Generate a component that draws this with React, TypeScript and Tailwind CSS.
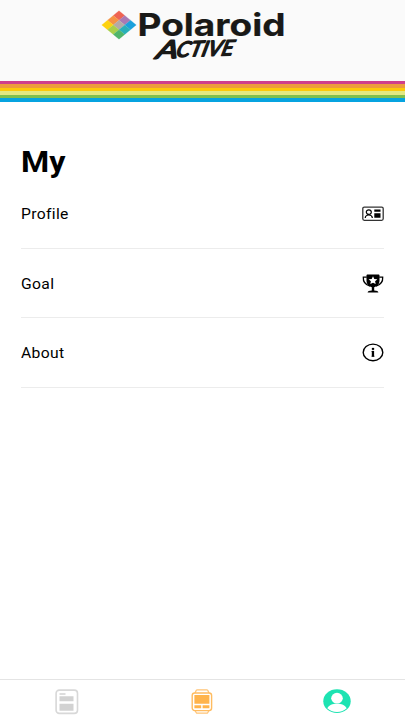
import React from 'react';

const cells = [
  ['#ee6352', '#a879b4', '#1aa0dc'],
  ['#f59244', '#b3aaa6', '#28b0b8'],
  ['#fdd20e', '#a9cf4a', '#4fb56a'],
];

const stripes = [
  { color: 'bg-[#cf3f8c]', height: 'h-[3px]' },
  { color: 'bg-[#ed9d3c]', height: 'h-1' },
  { color: 'bg-[#fdc90a]', height: 'h-[3px]' },
  { color: 'bg-[#e3e882]', height: 'h-1' },
  { color: 'bg-[#80bf4d]', height: 'h-[3px]' },
  { color: 'bg-[#06a3e0]', height: 'h-1' },
];

function Logo() {
  return (
    <svg width="190" height="60" viewBox="98 6 190 60" role="img" aria-label="Polaroid Active">
      <g transform="translate(119 10.7)">
        {cells.map((row, r) =>
          row.map((color, c) => {
            const x = (c - r) * 5.75;
            const y = (c + r) * 4.75;
            return (
              <path
                key={`${r}-${c}`}
                d={`M${x} ${y}l5.75 4.75l-5.75 4.75l-5.75 -4.75z`}
                fill={color}
                stroke={color}
                strokeWidth="0.2"
              />
            );
          })
        )}
      </g>
      <g fill="#191917" stroke="#191917">
        <text
          x="137.5"
          y="36"
          textLength="148"
          lengthAdjust="spacingAndGlyphs"
          fontFamily="Inter, sans-serif"
          fontSize="31.5"
          fontWeight="700"
          strokeWidth="0.2"
        >
          Polaroid
        </text>
        <g transform="translate(155 58.8) rotate(-2) skewX(-16)" strokeLinejoin="round">
          <text
            x="0"
            y="0"
            textLength="22"
            lengthAdjust="spacingAndGlyphs"
            fontFamily="Lato, sans-serif"
            fontSize="25"
            fontStyle="italic"
            strokeWidth="1.5"
          >
            A
          </text>
          <text
            x="20"
            y="-1"
            textLength="57"
            lengthAdjust="spacingAndGlyphs"
            fontFamily="Lato, sans-serif"
            fontSize="21"
            fontStyle="italic"
            strokeWidth="1.5"
          >
            CTIVE
          </text>
        </g>
      </g>
    </svg>
  );
}

function ProfileIcon() {
  return (
    <svg width="22" height="16" viewBox="0 0 22 16" fill="none" stroke="#000">
      <rect x="0.8" y="1.1" width="20.4" height="13.2" rx="1.5" strokeWidth="1.3" stroke="#333" />
      <ellipse cx="6.8" cy="6.1" rx="2.5" ry="2.3" strokeWidth="1.2" />
      <path d="M3.2 12c.2-2 1.5-3 3.6-3s3.4 1 3.6 3" strokeWidth="1.2" />
      <path d="M12.3 3.6h6.2v2.2h-6.2zM12.3 7.3h6.2v4.4h-6.2z" fill="#000" stroke="none" />
    </svg>
  );
}

function TrophyIcon() {
  return (
    <svg width="22" height="20" viewBox="0 0 22 20">
      <path
        d="M4.8 3.2H1.3C1 7.6 3.4 10.7 8 12M17.2 3.2h3.5c.3 4.4-2.1 7.5-6.7 8.8"
        fill="none"
        stroke="#000"
        strokeWidth="1.3"
      />
      <path d="M4.5 1.4C4.5.7 5 .4 5.6.4h10.8c.6 0 1.1.3 1.1 1v5.2c0 3.4-2.2 6-5.3 6.6v3.3c2.6.1 4.2.7 4.2 2.1H5.6c0-1.4 1.6-2 4.2-2.1v-3.3c-3.1-.6-5.3-3.2-5.3-6.6z" />
      <path
        d="M11 2.3l1.3 2.6 3.1.3-2.3 2 .6 2.9L11 8.7l-2.7 1.4.6-2.9-2.3-2 3.1-.3z"
        fill="#fff"
      />
    </svg>
  );
}

function AboutIcon() {
  return (
    <svg width="22" height="20" viewBox="0 0 22 20">
      <ellipse cx="11" cy="9.4" rx="9.8" ry="8.3" fill="none" stroke="#000" strokeWidth="1.4" />
      <ellipse cx="11" cy="5.9" rx="1.3" ry="1.1" />
      <path d="M9.8 7.9h2.3v5.9H9.8z" />
      <path d="M9.2 7.9h2v1h-2zM9.2 12.8h3.6v1H9.2z" opacity="0.4" />
    </svg>
  );
}

function FeedIcon() {
  return (
    <svg width="24" height="26" viewBox="0 0 24 26">
      <rect x="1.1" y="1.1" width="21.4" height="23.3" rx="3.2" fill="none" stroke="#d8d8d8" strokeWidth="1.6" />
      <path d="M4.5 4.3h6v1.4h-6zM4.5 7.2h14v5h-14zM4.5 14.7h14v7h-14z" fill="#d2d2d2" />
    </svg>
  );
}

function WatchIcon() {
  return (
    <svg width="22" height="26" viewBox="0 0 22 26">
      <path
        d="M4 4l1.3-2.7c.2-.4.5-.5 1-.5h9.4c.5 0 .8.1 1 .5L18 4M4 21.5l1.3 2.2c.2.4.5.5 1 .5h9.4c.5 0 .8-.1 1-.5l1.3-2.2"
        fill="none"
        stroke="#ffc476"
        strokeWidth="1.3"
      />
      <rect x="1.2" y="4" width="19.4" height="17.6" rx="2.5" fill="none" stroke="#ffbc60" strokeWidth="1.4" />
      <path d="M3.4 6h15v8.8h-15zM3.4 16.3h6.8v3H3.4zM11.6 16.3h6.8v3h-6.8z" fill="#ffb44c" />
    </svg>
  );
}

function UserIcon() {
  return (
    <svg width="28" height="25" viewBox="0 0 28 25">
      <ellipse cx="14" cy="12.2" rx="13.7" ry="11.9" fill="#1de3b2" />
      <ellipse cx="14" cy="9.2" rx="5.8" ry="5.4" fill="#fff" />
      <path d="M4.3 19.2c1.5-3.1 5.2-4.5 9.7-4.5s8.2 1.4 9.7 4.5c-2.4 2.4-5.8 3.7-9.7 3.7s-7.3-1.3-9.7-3.7z" fill="#fff" />
    </svg>
  );
}

const items = [
  { label: 'Profile', icon: <ProfileIcon /> },
  { label: 'Goal', icon: <TrophyIcon /> },
  { label: 'About', icon: <AboutIcon /> },
];

export default function App() {
  return (
    <div className="flex h-[720px] w-[405px] flex-col overflow-hidden bg-white font-[Roboto,sans-serif] text-black">
      <header className="shrink-0">
        <div className="flex h-[81px] bg-[#fafafa] pt-1.5 pl-[98px]">
          <Logo />
        </div>
        {stripes.map((stripe) => (
          <div key={stripe.color} className={`${stripe.color} ${stripe.height}`} />
        ))}
      </header>

      <main className="flex-1 px-[21px] pt-[43px]">
        <h1 className="origin-left scale-x-[1.11] text-[29px] leading-[34px] font-bold">My</h1>
        <ul>
          {items.map((item) => (
            <li
              key={item.label}
              className="flex h-[69.5px] items-center justify-between border-b border-[#ececec] pt-[2px]"
            >
              <span className="origin-left scale-x-[1.12] pt-px text-[14px] tracking-[0.3px]">{item.label}</span>
              {item.icon}
            </li>
          ))}
        </ul>
      </main>

      <nav className="flex h-[41px] shrink-0 border-t border-[#e4e4e4] pt-[9px]">
        <button className="flex w-[134px] justify-center">
          <FeedIcon />
        </button>
        <button className="flex w-[135px] justify-center">
          <WatchIcon />
        </button>
        <button className="flex w-[136px] justify-center">
          <UserIcon />
        </button>
      </nav>
    </div>
  );
}
